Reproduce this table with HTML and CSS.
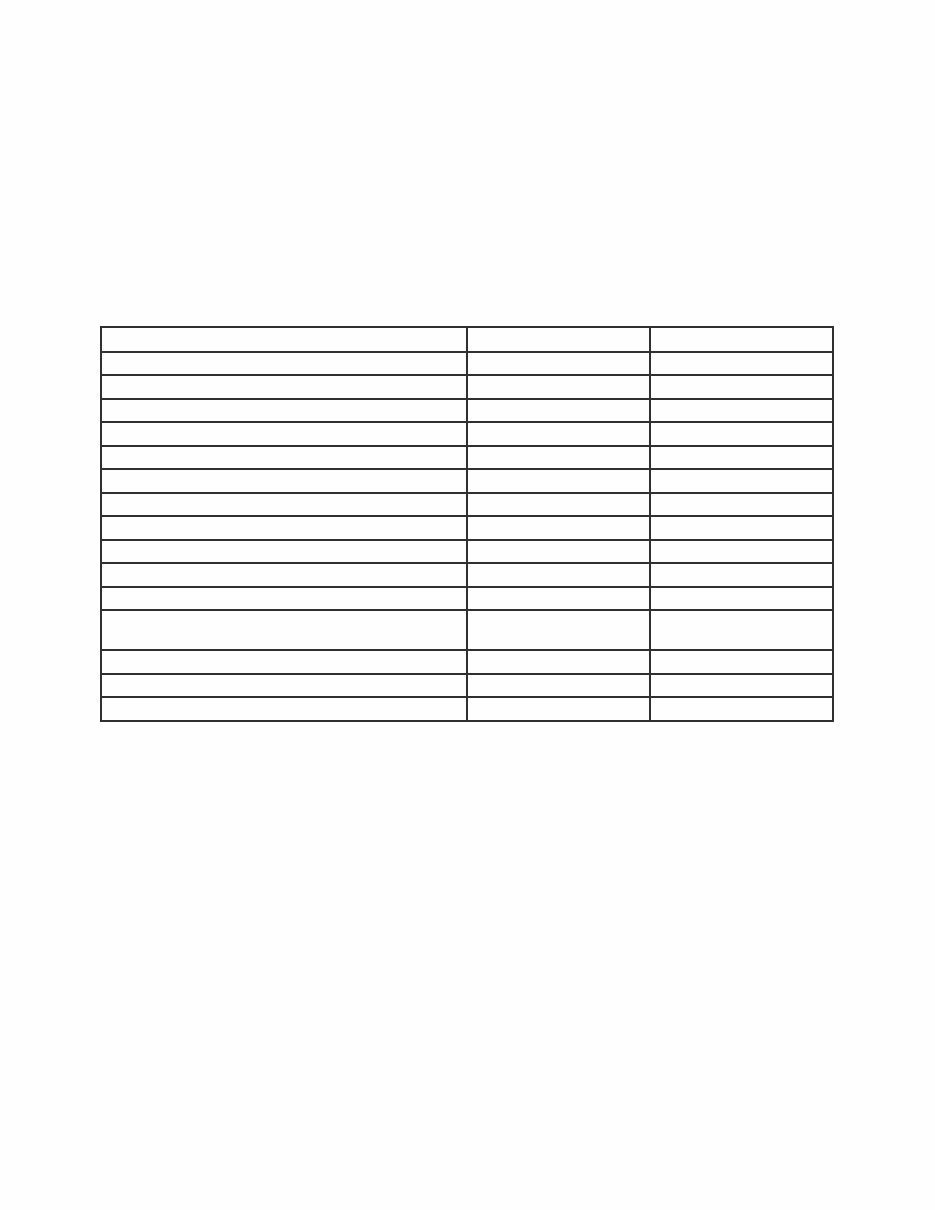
FILE: index.html
```html
<!DOCTYPE html>
<html>
<head>
<meta charset="utf-8">
<link rel="stylesheet" href="styles.css">
</head>
<body>
<div class="page">
  <table class="grid">
    <colgroup>
      <col class="c1">
      <col class="c2">
      <col class="c3">
    </colgroup>
    <tbody>
      <tr class="first"><td></td><td></td><td></td></tr>
      <tr><td></td><td></td><td></td></tr>
      <tr><td></td><td></td><td></td></tr>
      <tr><td></td><td></td><td></td></tr>
      <tr><td></td><td></td><td></td></tr>
      <tr><td></td><td></td><td></td></tr>
      <tr><td></td><td></td><td></td></tr>
      <tr><td></td><td></td><td></td></tr>
      <tr><td></td><td></td><td></td></tr>
      <tr><td></td><td></td><td></td></tr>
      <tr><td></td><td></td><td></td></tr>
      <tr><td></td><td></td><td></td></tr>
      <tr class="tall"><td></td><td></td><td></td></tr>
      <tr><td></td><td></td><td></td></tr>
      <tr><td></td><td></td><td></td></tr>
      <tr><td></td><td></td><td></td></tr>
    </tbody>
  </table>
</div>
</body>
</html>
```

FILE: styles.css
```css
html, body {
  margin: 0;
  padding: 0;
  background: #fefefe;
}
body {
  font-family: "Liberation Sans", Arial, sans-serif;
  font-size: 12px;
}
.page {
  padding: 326px 0 0 100px;
}
.grid {
  border-collapse: collapse;
  table-layout: fixed;
  width: 732px;
}
.c1 { width: 366px; }
.c2 { width: 183px; }
.c3 { width: 183px; }
.grid td {
  border: 2px solid #303030;
  padding: 0;
  height: 21.5px;
}
.grid tr.first td {
  height: 22.5px;
}
.grid tr.tall td {
  height: 38px;
}
```
